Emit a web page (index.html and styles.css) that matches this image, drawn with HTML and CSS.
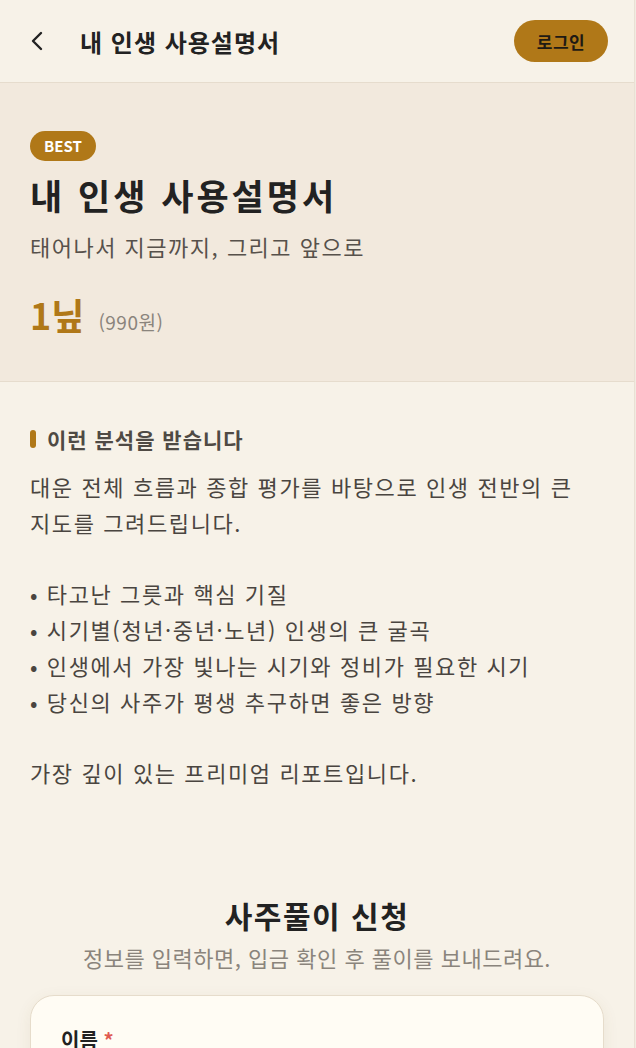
FILE: index.html
```html
<!DOCTYPE html>
<html lang="ko">
<head>
<meta charset="UTF-8">
<meta name="viewport" content="width=device-width, initial-scale=1.0">
<title>내 인생 사용설명서</title>
<link rel="stylesheet" href="styles.css">
</head>
<body>
<div class="app">
  <header class="top-bar">
    <button class="back-btn" aria-label="뒤로">
      <svg width="16" height="20" viewBox="0 0 16 20"><path d="M11 2 L3 10 L11 18" fill="none" stroke="#222" stroke-width="2.4" stroke-linecap="round" stroke-linejoin="round"/></svg>
    </button>
    <h1 class="top-title">내 인생 사용설명서</h1>
    <button class="login-btn">로그인</button>
  </header>

  <section class="hero">
    <span class="badge">BEST</span>
    <h2 class="hero-title">내 인생 사용설명서</h2>
    <p class="hero-sub">태어나서 지금까지, 그리고 앞으로</p>
    <div class="price">
      <span class="price-main">1닢</span>
      <span class="price-won">(990원)</span>
    </div>
  </section>

  <section class="detail">
    <h3 class="detail-heading">이런 분석을 받습니다</h3>
    <p class="detail-text">대운 전체 흐름과 종합 평가를 바탕으로 인생 전반의 큰 지도를 그려드립니다.

• 타고난 그릇과 핵심 기질
• 시기별(청년·중년·노년) 인생의 큰 굴곡
• 인생에서 가장 빛나는 시기와 정비가 필요한 시기
• 당신의 사주가 평생 추구하면 좋은 방향

가장 깊이 있는 프리미엄 리포트입니다.</p>
  </section>

  <section class="apply">
    <h2 class="apply-title">사주풀이 신청</h2>
    <p class="apply-sub">정보를 입력하면, 입금 확인 후 풀이를 보내드려요.</p>
    <form class="apply-card">
      <label class="field-label">이름 <span class="req">*</span></label>
      <input class="field-input" type="text">
    </form>
  </section>
</div>
</body>
</html>
```

FILE: styles.css
```css
:root {
  --page-bg: #f7f2e8;
  --hero-bg: #f2e9dd;
  --gold: #b07818;
  --line: #e6dccd;
  --text: #222;
  --body-text: #4a4540;
  --muted: #8a847c;
}
* {
  box-sizing: border-box;
}
body {
  margin: 0;
  background: #f1ebe1;
  font-family: "Noto Sans CJK KR", "Noto Sans", sans-serif;
  color: var(--text);
  word-break: keep-all;
}
.app {
  width: 635px;
  min-height: 100vh;
  background: var(--page-bg);
  border-right: 1px solid #e9e1d4;
}
.top-bar {
  display: flex;
  align-items: center;
  height: 83px;
  padding: 0 26px 0 30px;
  border-bottom: 1px solid var(--line);
}
.back-btn {
  background: none;
  border: none;
  padding: 0;
  width: 20px;
  display: flex;
  align-items: center;
  cursor: pointer;
}
.top-title {
  margin: 0 0 0 30px;
  flex: 1;
  font-size: 24px;
  font-weight: 700;
  letter-spacing: 1px;
}
.login-btn {
  background: var(--gold);
  border: none;
  border-radius: 21px;
  height: 42px;
  width: 94px;
  font-family: inherit;
  font-size: 17px;
  font-weight: 700;
  letter-spacing: 0.5px;
  color: #1e1a14;
  cursor: pointer;
}
.hero {
  background: var(--hero-bg);
  padding: 48px 30px 44px;
  border-bottom: 1px solid var(--line);
}
.badge {
  display: inline-block;
  background: var(--gold);
  color: #fff;
  font-size: 15px;
  font-weight: 700;
  height: 30px;
  line-height: 30px;
  padding: 0 14px;
  border-radius: 15px;
}
.hero-title {
  margin: 11px 0 0;
  font-size: 35px;
  font-weight: 700;
  line-height: 46px;
  letter-spacing: 3px;
}
.hero-sub {
  margin: 12px 0 0;
  font-size: 22px;
  line-height: 32px;
  letter-spacing: 1.5px;
  color: #57514b;
}
.price {
  display: flex;
  align-items: baseline;
  gap: 14px;
  margin-top: 29px;
}
.price-main {
  font-size: 36px;
  font-weight: 700;
  color: var(--gold);
  line-height: 46px;
}
.price-won {
  font-size: 19px;
  letter-spacing: 0.5px;
  color: var(--muted);
}
.detail {
  padding: 44px 30px 0;
}
.detail-heading {
  display: flex;
  align-items: center;
  margin: 0;
  font-size: 21px;
  font-weight: 700;
  letter-spacing: 1px;
  color: #4f4a44;
  line-height: 26px;
}
.detail-heading::before {
  content: "";
  width: 6px;
  height: 18px;
  border-radius: 3px;
  background: var(--gold);
  margin-right: 11px;
}
.detail-text {
  margin: 17px 0 0;
  white-space: pre-line;
  font-size: 22px;
  line-height: 35.8px;
  letter-spacing: 1.6px;
  color: var(--body-text);
}
.apply {
  padding: 104px 30px 0;
  text-align: center;
}
.apply-title {
  margin: 0;
  font-size: 30px;
  font-weight: 700;
  letter-spacing: 1.5px;
  line-height: 40px;
}
.apply-sub {
  margin: 7px 0 0;
  font-size: 22px;
  letter-spacing: 0.5px;
  color: var(--muted);
  line-height: 30px;
}
.apply-card {
  margin-top: 23px;
  text-align: left;
  background: #fffcf4;
  border: 1px solid #e6dccb;
  border-radius: 24px;
  box-shadow: 0 4px 16px rgba(120, 90, 40, 0.08);
  padding: 31px 30px;
  min-height: 200px;
}
.field-label {
  display: block;
  font-size: 20px;
  font-weight: 700;
  line-height: 26px;
  color: #222;
}
.req {
  color: #e05a50;
}
.field-input {
  width: 100%;
  height: 50px;
  margin-top: 10px;
  border: 1px solid #e6dccb;
  border-radius: 12px;
  background: #fff;
}
```
